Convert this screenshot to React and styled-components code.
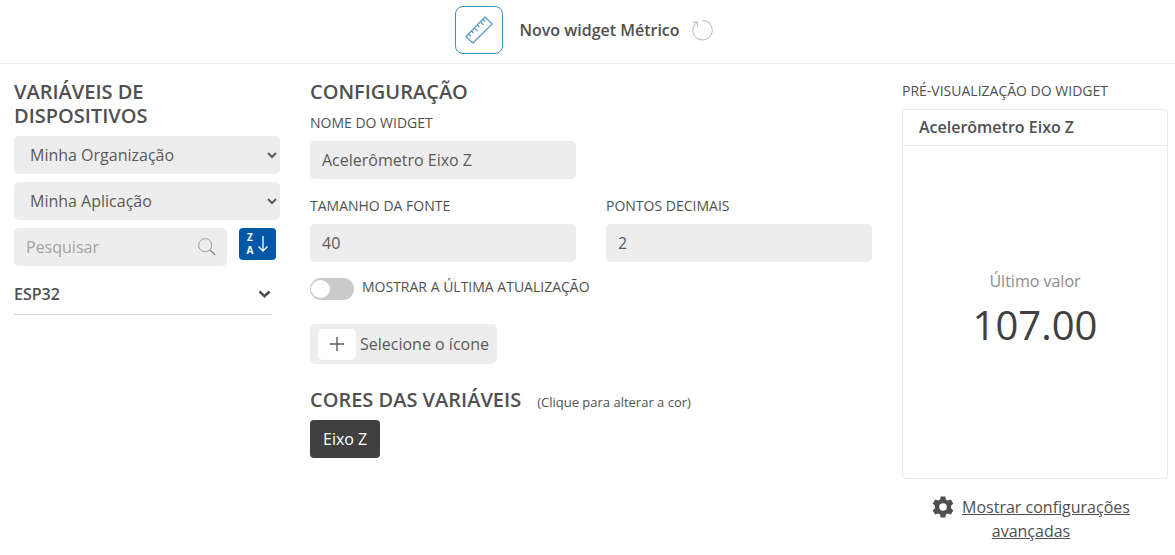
import React, { useState } from 'react'
import styled, { createGlobalStyle } from 'styled-components'

const GlobalStyle = createGlobalStyle`
*{box-sizing:border-box;}
body{
margin:0;
background-color:#fff;
color:#505050;
font-family:"Open Sans", "Noto Sans", sans-serif;
font-size:16px;
line-height:24px;
}
button, input, select{
font:inherit;
color:inherit;
border:none;
}
`
const Header = styled.header`
display:flex;
align-items:center;
justify-content:center;
gap:16px;
padding:6px 6px 9px 0;
border-bottom:1px solid #e9e9ee;
`
const WidgetIcon = styled.div`
width:48px;
height:48px;
display:flex;
align-items:center;
justify-content:center;
border:1px solid #3c93b8;
border-radius:8px;
`
const HeaderTitle = styled.h1`
margin:0;
display:flex;
align-items:center;
gap:12px;
font-size:16px;
font-weight:600;
`
const IconButton = styled.button`
display:flex;
padding:0;
background-color:transparent;
cursor:pointer;
`
const Columns = styled.main`
display:grid;
grid-template-columns:repeat(4, minmax(0, 1fr));
column-gap:30px;
padding:16px 7px 0 14px;
`
const Column = styled.section`
grid-column:span ${props => props.$span || 1};
`
const Heading = styled.h2`
margin:0;
font-size:20px;
font-weight:600;
line-height:24px;
text-transform:uppercase;
`
const Stack = styled.div`
display:flex;
flex-direction:column;
gap:8px;
margin-top:8px;
`
const Select = styled.select`
width:100%;
height:38px;
padding:0 0 0 12px;
border-radius:5px;
background-color:#ededed;
color:#5a5a5a;
`
const Input = styled.input`
width:100%;
height:38px;
padding:0 12px;
border-radius:5px;
background-color:#ededed;
color:#5a5a5a;
&::placeholder{color:#a3a3a3;opacity:1;}
`
const SearchRow = styled.div`
display:flex;
align-items:flex-start;
gap:12px;
padding-right:4px;
`
const SearchBox = styled.label`
flex:1;
display:flex;
align-items:center;
padding-right:11px;
border-radius:5px;
background-color:#ededed;
`
const SortButton = styled.button`
width:37px;
height:32px;
padding:0;
display:flex;
align-items:center;
justify-content:center;
gap:5px;
border-radius:4px;
background-color:#0057a6;
color:#fff;
cursor:pointer;
`
const SortLetters = styled.span`
display:flex;
flex-direction:column;
font-size:10px;
font-weight:700;
line-height:13px;
text-align:center;
`
const Device = styled.button`
display:flex;
align-items:center;
justify-content:space-between;
margin:8px 8px 0 0;
padding:0 1px 8px 0;
border-bottom:1px solid #d9d9d9;
background-color:transparent;
font-weight:600;
text-align:left;
cursor:pointer;
`
const Fields = styled.div`
display:grid;
grid-template-columns:repeat(2, minmax(0, 1fr));
column-gap:30px;
row-gap:16px;
padding-top:8px;
`
const Field = styled.div`
grid-column-start:${props => props.$first ? 1 : "auto"};
`
const Label = styled.label`
display:block;
padding-bottom:7px;
font-size:14px;
line-height:22px;
text-transform:uppercase;
`
const ToggleRow = styled.label`
display:flex;
align-items:flex-start;
gap:8px;
margin-top:16px;
font-size:14px;
line-height:18px;
text-transform:uppercase;
`
const Toggle = styled.input`
appearance:none;
width:44px;
height:22px;
margin:0;
padding:2px 1px;
display:flex;
justify-content:${props => props.checked ? "flex-end" : "flex-start"};
border-radius:11px;
background-color:${props => props.checked ? "#0057a6" : "#cacaca"};
cursor:pointer;
&::before{
content:"";
width:19px;
height:18px;
border-radius:50%;
background-color:#fff;
}
`
const SelectIcon = styled.button`
height:40px;
display:flex;
align-items:center;
gap:4px;
margin-top:24px;
padding:0 8px;
border-radius:5px;
background-color:#ededed;
color:#5a5a5a;
cursor:pointer;
`
const PlusTile = styled.span`
width:38px;
height:31px;
display:flex;
align-items:center;
justify-content:center;
border-radius:5px;
background-color:#fff;
`
const ColorsTitle = styled.div`
display:flex;
align-items:baseline;
gap:16px;
margin:24px 0 8px;
`
const Hint = styled.span`
font-size:13px;
line-height:18px;
`
const ColorButton = styled.button`
height:38px;
padding:0 13px;
border-radius:4px;
background-color:${props => props.$bg};
color:#fff;
cursor:pointer;
`
const PreviewTitle = styled.h2`
margin:0 0 7px;
font-size:14px;
font-weight:400;
line-height:22px;
text-transform:uppercase;
`
const Card = styled.article`
border:1px solid #e9e9e9;
border-radius:4px;
`
const CardTitle = styled.h3`
margin:0;
padding:5px 16px 6px;
border-bottom:1px solid #e9e9e9;
font-size:16px;
font-weight:600;
`
const Metric = styled.div`
display:flex;
flex-direction:column;
align-items:center;
padding:123px 0 126px;
color:#8c8c8c;
`
const MetricValue = styled.strong`
padding-top:4px;
color:#404040;
font-size:${props => props.$size}px;
font-weight:400;
line-height:55px;
`
const Advanced = styled.div`
padding:16px 16px 0 8px;
text-align:center;
svg{margin-right:8px;vertical-align:-5px;}
`
const Link = styled.a`
color:inherit;
text-decoration:underline;
`

const RulerIcon = () => (
    <svg width="28" height="28" viewBox="0 0 28 28" fill="none" stroke="#5a9bc9" strokeWidth="1.2" strokeLinejoin="round">
        <path d="M1 20.500 L20 1 L27 8 L8 27 Z" />
        <path d="M3.500 18 L6 20.500 M6.500 15 L8.500 17 M9.500 12 L12.500 15 M12.500 9 L14.500 11 M15.500 6 L18.500 9 M18 3.500 L20 5.500" />
    </svg>
)
const RefreshIcon = () => (
    <svg width="22" height="22" viewBox="0 0 22 22" fill="none" stroke="#b5b5b5" strokeWidth="1">
        <path d="M10.500 1.500 A9.700 9.700 0 1 1 4.800 3.400" />
        <path d="M1 3.300 L5.400 2.900 L5.500 7.500" />
    </svg>
)
const SearchIcon = () => (
    <svg width="20" height="20" viewBox="0 0 20 20" fill="none" stroke="#929292">
        <circle cx="8" cy="8" r="7.300" strokeWidth="1" />
        <path d="M13.300 13.300 L19 18.800" strokeWidth="1.700" />
    </svg>
)
const ArrowDownIcon = () => (
    <svg width="10" height="16" viewBox="0 0 10 16" fill="none" stroke="currentColor" strokeWidth="1.300">
        <path d="M5 0 V15 M0.500 10.500 L5 15 L9.500 10.500" />
    </svg>
)
const ChevronIcon = () => (
    <svg width="13" height="9" viewBox="0 0 13 9" fill="none" stroke="currentColor" strokeWidth="2.600">
        <path d="M1.500 1.500 L6.500 6.300 L11.500 1.500" />
    </svg>
)
const PlusIcon = () => (
    <svg width="14" height="14" viewBox="0 0 14 14" stroke="currentColor" strokeWidth="1.400">
        <path d="M7 0 V14 M0 7 H14" />
    </svg>
)
const GearIcon = () => (
    <svg width="22" height="22" viewBox="0 0 22 22" fill="currentColor" fillRule="evenodd">
        <path d="M8.600 0.500 H13.400 L13.900 3.400 L15.800 4.500 L18.800 3.400 L21.300 7.600 L19 9.700 V12.300 L21.300 14.400 L18.800 18.600 L15.800 17.500 L13.900 18.600 L13.400 21.500 H8.600 L8.100 18.600 L6.200 17.500 L3.200 18.600 L0.700 14.400 L3 12.300 V9.700 L0.700 7.600 L3.200 3.400 L6.200 4.500 L8.100 3.400 Z M11 7.200 A3.800 3.800 0 1 0 11 14.800 A3.800 3.800 0 1 0 11 7.200 Z" />
    </svg>
)

const App = () => {
    const [name, setName] = useState("Acelerômetro Eixo Z");
    const [fontSize, setFontSize] = useState("40");
    const [decimals, setDecimals] = useState("2");
    const [showUpdate, setShowUpdate] = useState(false);
    const value = (107).toFixed(Math.min(Math.max(Number(decimals) || 0, 0), 10));

    return (
        <>
            <GlobalStyle />
            <Header>
                <WidgetIcon><RulerIcon /></WidgetIcon>
                <HeaderTitle>
                    Novo widget Métrico
                    <IconButton type="button" aria-label="Recarregar"><RefreshIcon /></IconButton>
                </HeaderTitle>
            </Header>
            <Columns>
                <Column>
                    <Heading>Variáveis de dispositivos</Heading>
                    <Stack>
                        <Select aria-label="Organização">
                            <option>Minha Organização</option>
                        </Select>
                        <Select aria-label="Aplicação">
                            <option>Minha Aplicação</option>
                        </Select>
                        <SearchRow>
                            <SearchBox>
                                <Input type="text" placeholder="Pesquisar" aria-label="Pesquisar" />
                                <SearchIcon />
                            </SearchBox>
                            <SortButton type="button" aria-label="Ordenar">
                                <SortLetters>
                                    <span>Z</span>
                                    <span>A</span>
                                </SortLetters>
                                <ArrowDownIcon />
                            </SortButton>
                        </SearchRow>
                        <Device type="button">
                            ESP32
                            <ChevronIcon />
                        </Device>
                    </Stack>
                </Column>
                <Column $span={2}>
                    <Heading>Configuração</Heading>
                    <Fields>
                        <Field>
                            <Label htmlFor="name">Nome do widget</Label>
                            <Input id="name" value={name} onChange={(e) => setName(e.target.value)} />
                        </Field>
                        <Field $first>
                            <Label htmlFor="size">Tamanho da fonte</Label>
                            <Input id="size" value={fontSize} onChange={(e) => setFontSize(e.target.value)} />
                        </Field>
                        <Field>
                            <Label htmlFor="decimals">Pontos decimais</Label>
                            <Input id="decimals" value={decimals} onChange={(e) => setDecimals(e.target.value)} />
                        </Field>
                    </Fields>
                    <ToggleRow>
                        <Toggle type="checkbox" checked={showUpdate} onChange={(e) => setShowUpdate(e.target.checked)} />
                        Mostrar a última atualização
                    </ToggleRow>
                    <SelectIcon type="button">
                        <PlusTile><PlusIcon /></PlusTile>
                        Selecione o ícone
                    </SelectIcon>
                    <ColorsTitle>
                        <Heading>Cores das variáveis</Heading>
                        <Hint>(Clique para alterar a cor)</Hint>
                    </ColorsTitle>
                    <ColorButton type="button" $bg="#404040">Eixo Z</ColorButton>
                </Column>
                <Column>
                    <PreviewTitle>Pré-visualização do widget</PreviewTitle>
                    <Card>
                        <CardTitle>{name}</CardTitle>
                        <Metric>
                            Último valor
                            <MetricValue $size={Number(fontSize) || 40}>{value}</MetricValue>
                        </Metric>
                    </Card>
                    <Advanced>
                        <GearIcon />
                        <Link href="#avancadas">Mostrar configurações avançadas</Link>
                    </Advanced>
                </Column>
            </Columns>
        </>
    )
}

export default App
